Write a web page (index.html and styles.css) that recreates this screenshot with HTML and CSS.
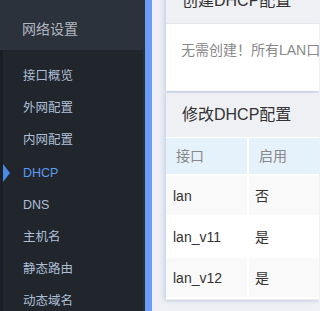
FILE: index.html
```html
<!DOCTYPE html>
<html lang="zh-CN">
<head>
<meta charset="utf-8">
<title>DHCP</title>
<link rel="stylesheet" href="styles.css">
</head>
<body>
<div class="app">
  <aside class="sidebar">
    <div class="side-head">网络设置</div>
    <ul class="menu">
      <li class="item">接口概览</li>
      <li class="item">外网配置</li>
      <li class="item">内网配置</li>
      <li class="item active">DHCP</li>
      <li class="item">DNS</li>
      <li class="item">主机名</li>
      <li class="item">静态路由</li>
      <li class="item">动态域名</li>
    </ul>
  </aside>
  <div class="bluebar"></div>
  <main class="main">
    <div class="content">
      <section class="card">
        <div class="card-head">创建DHCP配置</div>
        <div class="card-body">无需创建！所有LAN口都已配置DHCP</div>
      </section>
      <section class="card card-2">
        <div class="card-head">修改DHCP配置</div>
        <div class="table">
          <div class="row head">
            <div class="cell c1">接口</div>
            <div class="cell c2">启用</div>
          </div>
          <div class="row odd">
            <div class="cell c1">lan</div>
            <div class="cell c2">否</div>
          </div>
          <div class="row even">
            <div class="cell c1">lan_v11</div>
            <div class="cell c2">是</div>
          </div>
          <div class="row odd">
            <div class="cell c1">lan_v12</div>
            <div class="cell c2">是</div>
          </div>
        </div>
      </section>
    </div>
  </main>
</div>
</body>
</html>
```
FILE: styles.css
```css
html, body {
  margin: 0;
  padding: 0;
}
body {
  width: 319px;
  height: 311px;
  overflow: hidden;
  font-family: "Liberation Sans", "Noto Sans CJK SC", sans-serif;
  background: #eef0f5;
}
.app {
  display: flex;
  height: 311px;
}
.sidebar {
  width: 145px;
  flex: none;
  display: flex;
  flex-direction: column;
  background: #21262d;
}
.side-head {
  height: 50px;
  background: #2c323b;
  color: #b3b8c0;
  font-size: 14px;
  padding-left: 22px;
  box-sizing: border-box;
  line-height: 58px;
}
.menu {
  flex: 1;
  list-style: none;
  margin: 0;
  padding: 10px 0 0 0;
  border-left: 3px solid #1b1f24;
  border-right: 2px solid #282e36;
}
.item {
  position: relative;
  height: 32.2px;
  line-height: 32px;
  padding-left: 20px;
  font-size: 12.5px;
  color: #aebfd5;
  white-space: nowrap;
}
.item.active {
  color: #5c9bf0;
}
.item.active::before {
  content: "";
  position: absolute;
  left: 0;
  top: 7px;
  border-top: 9px solid transparent;
  border-bottom: 9px solid transparent;
  border-left: 7px solid #4a8ae6;
}
.bluebar {
  width: 7px;
  flex: none;
  background: #6a9df5;
}
.main {
  flex: 1;
  min-width: 0;
  overflow: hidden;
  padding-left: 14px;
  background: #eef0f5;
}
.content {
  margin-top: -22px;
}
.card {
  background: #fff;
  box-shadow: -3px 0 5px rgba(120, 150, 220, 0.22), 0 1px 3px rgba(170, 185, 210, 0.4);
}
.card-2 {
  margin-top: 2px;
}
.card-head {
  height: 45px;
  line-height: 45px;
  padding-left: 16px;
  background: #eff0f4;
  border-bottom: 1px solid #e4e6eb;
  color: #333;
  font-size: 16px;
  white-space: nowrap;
}
.card-2 .card-head {
  height: 44px;
  line-height: 44px;
  border-bottom: none;
}
.card-body {
  padding: 16px 15px 31px;
  line-height: 20px;
  font-size: 14px;
  color: #888;
  white-space: nowrap;
}
.table {
  display: flex;
  flex-direction: column;
  gap: 2px;
  padding-bottom: 2px;
  background: #fff;
  border-bottom: 1px solid #ebebeb;
  padding-top: 1px;
}
.row {
  display: flex;
  gap: 2px;
  height: 39px;
  line-height: 40px;
  font-size: 14px;
  color: #333;
}
.row.head {
  height: 36px;
  line-height: 36px;
  color: #888;
}
.cell {
  box-sizing: border-box;
  white-space: nowrap;
}
.c1 {
  width: 81px;
  flex: none;
  padding-left: 7px;
}
.c2 {
  flex: 1;
  padding-left: 6px;
}
.row.head .cell {
  background: #e5f1fb;
  padding-left: 10px;
}
.row.odd .cell {
  background: #f9f9f9;
}
.row.even .cell {
  background: #fff;
}
```
